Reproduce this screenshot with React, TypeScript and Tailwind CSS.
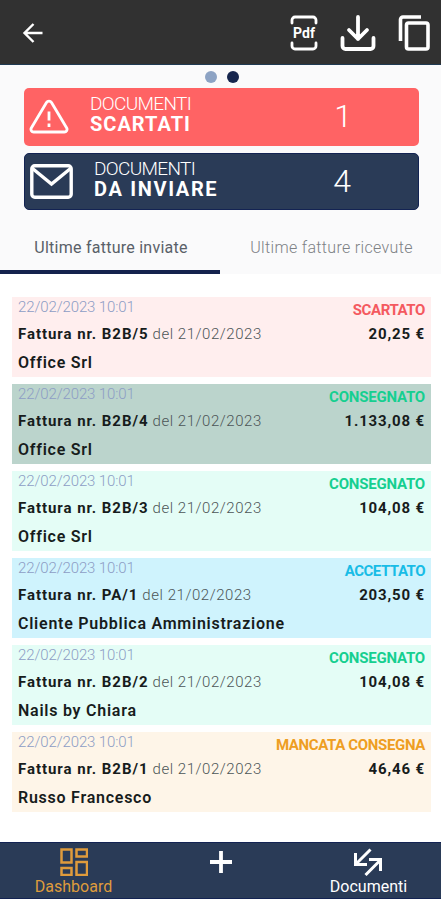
import React from "react";
import { clsx } from "clsx";

const invoices = [
  {
    number: "B2B/5",
    customer: "Office Srl",
    status: "SCARTATO",
    amount: "20,25 €",
    bgColor: "bg-[#ffeeee]",
    statusColor: "text-[#f4595f]",
    statusTracking: "tracking-[-0.4px]",
  },
  {
    number: "B2B/4",
    customer: "Office Srl",
    status: "CONSEGNATO",
    amount: "1.133,08 €",
    bgColor: "bg-[#bbd4cc]",
    statusColor: "text-[#16cf90]",
    statusTracking: "tracking-[-0.2px]",
  },
  {
    number: "B2B/3",
    customer: "Office Srl",
    status: "CONSEGNATO",
    amount: "104,08 €",
    bgColor: "bg-[#e4fdf6]",
    statusColor: "text-[#16cf90]",
    statusTracking: "tracking-[-0.2px]",
  },
  {
    number: "PA/1",
    customer: "Cliente Pubblica Amministrazione",
    status: "ACCETTATO",
    amount: "203,50 €",
    bgColor: "bg-[#cff3fd]",
    statusColor: "text-[#18bce6]",
    statusTracking: "tracking-[-0.5px]",
  },
  {
    number: "B2B/2",
    customer: "Nails by Chiara",
    status: "CONSEGNATO",
    amount: "104,08 €",
    bgColor: "bg-[#e4fdf6]",
    statusColor: "text-[#16cf90]",
    statusTracking: "tracking-[-0.2px]",
  },
  {
    number: "B2B/1",
    customer: "Russo Francesco",
    status: "MANCATA CONSEGNA",
    amount: "46,46 €",
    bgColor: "bg-[#fef5e8]",
    statusColor: "text-[#ee9e22]",
    statusTracking: "tracking-[-0.35px]",
  },
];

const TopBar = () => (
  <header className="flex h-[65px] items-center bg-[#313131] border-b border-[#1f3a52] text-white">
    <svg className="ml-[22px] mt-0.5 h-[22px] w-[22px]" viewBox="0 0 22 22" fill="none" stroke="currentColor" strokeWidth="2.4">
      <path d="M20.5 11H3M11.5 2L2.5 11l9 9" />
    </svg>
    <div className="ml-auto flex items-center">
      <div className="relative mt-0.5 flex h-9 w-[30px] items-center justify-center">
        <svg className="absolute inset-0 h-9 w-[30px]" viewBox="0 0 30 36" fill="none" stroke="currentColor" strokeWidth="2.8" strokeLinecap="round">
          <path d="M3 8V5a3 3 0 0 1 3-3h18a3 3 0 0 1 3 3v3M3 28v3a3 3 0 0 0 3 3h18a3 3 0 0 0 3-3v-3" />
        </svg>
        <span className="text-[14px] leading-none font-bold">Pdf</span>
      </div>
      <svg className="mt-0.5 ml-[21px] h-9 w-9" viewBox="0 0 36 36" fill="none" stroke="currentColor" strokeWidth="3.8" strokeLinecap="round" strokeLinejoin="round">
        <path d="M18 2v22M9 15l9 9 9-9M2.5 23v8a3 3 0 0 0 3 3h25a3 3 0 0 0 3-3v-8" />
      </svg>
      <svg className="mt-0.5 mr-[11px] ml-[22px] h-9 w-8" viewBox="0 0 32 36" fill="none" stroke="currentColor" strokeWidth="3.6">
        <path d="M2.5 26V4.5a2.5 2.5 0 0 1 2.5-2.5H23" />
        <rect x="8.5" y="8" width="21.5" height="26" rx="2" />
      </svg>
    </div>
  </header>
);

const Summary = () => (
  <section className="pr-[22px] pl-6">
    <div className="flex h-[23px] items-center justify-center gap-2.5">
      <span className="h-3 w-3 rounded-full bg-[#8da3c4]" />
      <span className="h-3 w-3 rounded-full bg-[#17264e]" />
    </div>
    <div className="flex h-[58px] items-center rounded-[5px] bg-[#ff6364] text-white">
      <svg className="ml-[5px] h-10 w-10" viewBox="0 0 40 40" fill="none" stroke="currentColor" strokeWidth="2.8" strokeLinejoin="round">
        <path d="M17.5 5.5 2.3 31a2.7 2.7 0 0 0 2.4 4h30.6a2.7 2.7 0 0 0 2.4-4L22.5 5.5a2.9 2.9 0 0 0-5 0Z" />
        <path d="M20 14.500v9M20 26.500v3.500" />
      </svg>
      <div className="mb-[5px] ml-[21px] w-[225px]">
        <p className="text-[19px] leading-5 font-light tracking-[-0.65px]">DOCUMENTI</p>
        <p className="text-xl leading-[21px] font-bold tracking-[1px]">SCARTATI</p>
      </div>
      <span className="mb-0.5 w-14 text-center text-[32px] leading-none font-light">1</span>
    </div>
    <div className="mt-[7px] flex h-[57px] items-center rounded-[5px] border border-[#132353] bg-[#2a3b57] text-white">
      <svg className="ml-[5px] h-[35px] w-[43px]" viewBox="0 0 43 35" fill="none" stroke="currentColor" strokeWidth="3.4">
        <rect x="1.8" y="1.8" width="39.4" height="31.4" rx="3" />
        <path d="M2.5 4.5l19 15.5 19-15.5" />
      </svg>
      <div className="mb-[5px] ml-[21px] w-[220px] whitespace-nowrap">
        <p className="text-[19px] leading-5 font-light tracking-[-0.65px]">DOCUMENTI</p>
        <p className="text-xl leading-[21px] font-bold tracking-[1.65px]">DA INVIARE</p>
      </div>
      <span className="mb-0.5 w-14 text-center text-[32px] leading-none font-light">4</span>
    </div>
  </section>
);

const Tabs = () => (
  <nav className="flex h-16 text-base">
    <div className="flex w-[220px] items-center justify-center border-b-4 border-[#15224d] pt-4 pl-0.5 text-[#596068]">
      <span className="tracking-[0.25px]">Ultime fatture inviate</span>
    </div>
    <div className="flex flex-1 items-center justify-center pt-3 pl-0.5 text-[#7d8185]">
      <span className="tracking-[0.33px] font-light">Ultime fatture ricevute</span>
    </div>
  </nav>
);

const InvoiceCard = ({ invoice }: { invoice: (typeof invoices)[number] }) => (
  <article className={clsx("flex h-20 justify-between px-1.5", invoice.bgColor)}>
    <div className="text-[#171c1c]">
      <p className="h-[22px] text-[15px] leading-[21px] font-light tracking-[-0.12px] text-[#8d9dc5]">22/02/2023 10:01</p>
      <p className="text-[15px] leading-[30px]">
        <span className="font-bold tracking-[0.95px]">Fattura nr. {invoice.number}</span>
        <span className="ml-1 font-light tracking-[0.55px] text-[#4c5557]">del 21/02/2023</span>
      </p>
      <p className="text-[16px] leading-7 font-semibold tracking-[0.75px]">{invoice.customer}</p>
    </div>
    <div className="pt-[3px] text-right">
      <p className={clsx("text-[15px] leading-5 font-bold", invoice.statusColor, invoice.statusTracking)}>{invoice.status}</p>
      <p className="text-[15px] leading-7 font-bold tracking-[0.85px] text-[#171c1c]">{invoice.amount}</p>
    </div>
  </article>
);

const BottomBar = () => (
  <footer className="mt-auto flex h-[57px] justify-between border-y border-[#132353] bg-[#2a3b57] text-white">
    <div className="flex w-[147px] flex-col items-center pt-[5px] text-[#df9b3c]">
      <svg className="h-7 w-7" viewBox="0 0 28 28" fill="none" stroke="currentColor" strokeWidth="2.5">
        <rect x="1.5" y="1.5" width="10" height="13" />
        <rect x="16.5" y="1.5" width="10.5" height="7" />
        <rect x="1.5" y="20" width="10" height="7" />
        <rect x="16.5" y="14" width="10.5" height="13" />
      </svg>
      <span className="mt-px text-base leading-[19px]">Dashboard</span>
    </div>
    <div className="flex w-[147px] justify-center pt-[7px]">
      <svg className="h-6 w-6" viewBox="0 0 24 24" stroke="currentColor" strokeWidth="3.8">
        <path d="M12 1v22M1 12h22" />
      </svg>
    </div>
    <div className="flex w-[147px] flex-col items-center pt-[5px]">
      <svg className="h-7 w-[30px]" viewBox="0 0 30 28" fill="none" stroke="currentColor" strokeWidth="3">
        <path d="M17.5 1.5 3.500 15.500M2.500 5v11.500H14M12.500 27 27 12.500M16 11.500h11.500V23" />
      </svg>
      <span className="mt-px ml-0.5 text-base leading-[19px]">Documenti</span>
    </div>
  </footer>
);

export default function App() {
  return (
    <main className="flex h-[900px] w-full flex-col bg-white pb-px font-['Roboto',sans-serif]">
      <TopBar />
      <div className="bg-[#fafafb]">
        <Summary />
        <Tabs />
      </div>
      <section className="mt-[23px] ml-3 flex w-[419px] flex-col gap-[7px]">
        {invoices.map((invoice) => (
          <InvoiceCard key={invoice.number} invoice={invoice} />
        ))}
      </section>
      <BottomBar />
    </main>
  );
}
